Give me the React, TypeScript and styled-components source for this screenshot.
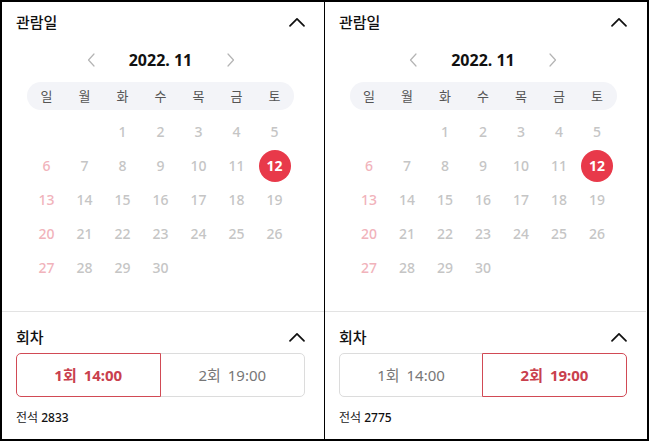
import React, { useState } from "react";
import styled, { createGlobalStyle, css } from "styled-components";

const GlobalStyle = createGlobalStyle`
  html, body { margin: 0; padding: 0; background: #fff; }
  body { font-family: "Noto Sans", "Noto Sans CJK KR", sans-serif; color: #111; }
  * { box-sizing: border-box; }
`;

const Frame = styled.div`
  display: flex;
  width: 649px;
  height: 441px;
  border: 2px solid #000;
  background: #fff;
`;

const Panel = styled.div`
  width: 322px;
  flex: none;
  display: flex;
  flex-direction: column;
  & + & { border-left: 1px solid #000; }
`;

const CalendarSection = styled.section`
  padding: 0 19px 26px 14px;
`;

const SessionSection = styled.section`
  border-top: 1px solid #e3e3e3;
  padding: 9px 19px 0 14px;
`;

const SectionHeader = styled.div<{ $h: number }>`
  display: flex;
  align-items: center;
  justify-content: space-between;
  height: ${(p) => p.$h}px;
`;

const SectionTitle = styled.h2`
  margin: 0;
  font-size: 15px;
  font-weight: 500;
  line-height: 20px;
  color: #111;
`;

const IconButton = styled.button`
  border: 0;
  background: none;
  padding: 0;
  display: flex;
  align-items: center;
  justify-content: center;
  cursor: pointer;
`;

const MonthNav = styled.div`
  display: flex;
  align-items: center;
  justify-content: center;
  gap: 10px;
  height: 36px;
`;

const ArrowButton = styled(IconButton)`
  width: 20px;
  height: 20px;
`;

const MonthLabel = styled.div`
  width: 100px;
  text-align: center;
  font-size: 16px;
  font-weight: 700;
  line-height: 20px;
  color: #111;
`;

const WeekBar = styled.div`
  margin: 4px auto 0;
  width: 267px;
  height: 28px;
  border-radius: 14px;
  background: #f3f4f8;
  display: grid;
  grid-template-columns: repeat(7, 38px);
  align-items: center;
  justify-content: center;
`;

const WeekLabel = styled.span`
  text-align: center;
  font-size: 13px;
  line-height: 18px;
  color: #555;
`;

const DayGrid = styled.div`
  margin: 5px auto 0;
  width: 266px;
  display: grid;
  grid-template-columns: repeat(7, 38px);
  grid-auto-rows: 34px;
`;

const DayCell = styled.div`
  display: flex;
  align-items: center;
  justify-content: center;
`;

const Day = styled.span<{ $sunday?: boolean; $selected?: boolean }>`
  width: 32px;
  height: 32px;
  border-radius: 50%;
  display: flex;
  align-items: center;
  justify-content: center;
  font-size: 14px;
  font-weight: 500;
  line-height: 18px;
  color: ${(p) => (p.$sunday ? "#f1b3bb" : "#c5c5c5")};
  ${(p) =>
    p.$selected &&
    css`
      background: #e8394a;
      color: #fff;
      font-weight: 700;
    `}
`;

const SessionGroup = styled.div`
  margin-top: 0;
  display: grid;
  grid-template-columns: 1fr 1fr;
  height: 44px;
`;

const SessionButton = styled.button<{ $active: boolean; $first: boolean }>`
  position: relative;
  height: 44px;
  padding: 0;
  background: #fff;
  font-family: inherit;
  font-size: 15px;
  line-height: 20px;
  cursor: pointer;
  border: 1px solid ${(p) => (p.$active ? "#d14a55" : "#dcdcdc")};
  border-radius: ${(p) => (p.$first ? "5px 0 0 5px" : "0 5px 5px 0")};
  margin-left: ${(p) => (p.$first ? "0" : "-1px")};
  z-index: ${(p) => (p.$active ? 1 : 0)};
  color: ${(p) => (p.$active ? "#c9404d" : "#777")};
  font-weight: ${(p) => (p.$active ? 700 : 400)};
  word-spacing: 3px;
`;

const SeatInfo = styled.p`
  margin: 12px 0 0;
  font-size: 12px;
  line-height: 18px;
  color: #222;
`;

const SeatCount = styled.span`
  font-weight: 500;
  color: #111;
`;

const ChevronUp = () => (
  <svg width="16" height="10" viewBox="0 0 16 10" fill="none">
    <path d="M1 8.8 L8 1.8 L15 8.8" stroke="#111" strokeWidth="1.7" strokeLinecap="round" strokeLinejoin="round" />
  </svg>
);

const ChevronSide = ({ dir }: { dir: "left" | "right" }) => (
  <svg width="8" height="14" viewBox="0 0 8 14" fill="none">
    <path
      d={dir === "left" ? "M7 1 L1.5 7 L7 13" : "M1 1 L6.5 7 L1 13"}
      stroke="#b4b4b4"
      strokeWidth="1.2"
      strokeLinecap="round"
      strokeLinejoin="round"
    />
  </svg>
);

const WEEK = ["일", "월", "화", "수", "목", "금", "토"];
const SESSIONS = [
  { round: "1회", time: "14:00", seats: 2833 },
  { round: "2회", time: "19:00", seats: 2775 },
];

const BookingPanel = ({ initial }: { initial: number }) => {
  const [session, setSession] = useState(initial);
  const offset = 2;
  const cells: (number | null)[] = [
    ...Array.from({ length: offset }, () => null),
    ...Array.from({ length: 30 }, (_, i) => i + 1),
  ];
  return (
    <Panel>
      <CalendarSection>
        <SectionHeader $h={40}>
          <SectionTitle>관람일</SectionTitle>
          <IconButton aria-label="접기">
            <ChevronUp />
          </IconButton>
        </SectionHeader>
        <MonthNav>
          <ArrowButton aria-label="이전 달">
            <ChevronSide dir="left" />
          </ArrowButton>
          <MonthLabel>2022. 11</MonthLabel>
          <ArrowButton aria-label="다음 달">
            <ChevronSide dir="right" />
          </ArrowButton>
        </MonthNav>
        <WeekBar>
          {WEEK.map((w) => (
            <WeekLabel key={w}>{w}</WeekLabel>
          ))}
        </WeekBar>
        <DayGrid>
          {cells.map((d, i) => (
            <DayCell key={i}>
              {d !== null && (
                <Day $sunday={i % 7 === 0} $selected={d === 12}>
                  {d}
                </Day>
              )}
            </DayCell>
          ))}
        </DayGrid>
      </CalendarSection>
      <SessionSection>
        <SectionHeader $h={32}>
          <SectionTitle>회차</SectionTitle>
          <IconButton aria-label="접기">
            <ChevronUp />
          </IconButton>
        </SectionHeader>
        <SessionGroup>
          {SESSIONS.map((s, i) => (
            <SessionButton key={s.round} $active={session === i} $first={i === 0} onClick={() => setSession(i)}>
              {s.round} {s.time}
            </SessionButton>
          ))}
        </SessionGroup>
        <SeatInfo>
          전석 <SeatCount>{SESSIONS[session].seats}</SeatCount>
        </SeatInfo>
      </SessionSection>
    </Panel>
  );
};

export default function App() {
  return (
    <>
      <GlobalStyle />
      <Frame>
        <BookingPanel initial={0} />
        <BookingPanel initial={1} />
      </Frame>
    </>
  );
}
